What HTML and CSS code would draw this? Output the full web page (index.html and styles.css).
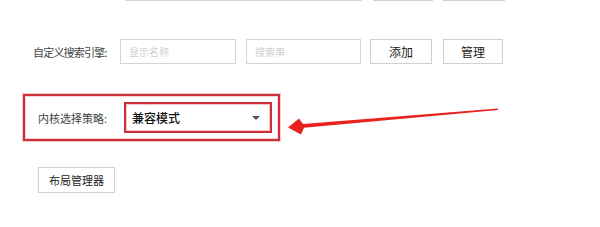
FILE: index.html
```html
<!DOCTYPE html>
<html lang="zh-CN">
<head>
    <meta charset="UTF-8">
    <title>高级设置</title>
    <link rel="stylesheet" href="styles.css">
</head>
<body>
    <div class="settings">
        <!-- row cut off at the top -->
        <div class="row row-top">
            <div class="input wide"></div>
            <div class="btn"></div>
            <div class="btn w62"></div>
        </div>

        <!-- custom search engine -->
        <div class="row row-engine">
            <span class="label">自定义搜索引擎:</span>
            <div class="input i1"><span class="placeholder">显示名称</span></div>
            <div class="input i2"><span class="placeholder">搜索串</span></div>
            <div class="btn add">添加</div>
            <div class="btn manage">管理</div>
        </div>

        <!-- kernel strategy, highlighted -->
        <div class="row row-kernel">
            <span class="label">内核选择策略:</span>
            <div class="select">
                <span class="select-text">兼容模式</span>
                <span class="caret"></span>
            </div>
        </div>

        <div class="btn layout">布局管理器</div>
    </div>

    <svg class="pointer" width="600" height="227" viewBox="0 0 600 227">
        <polygon fill="#e8221f" points="498,108.4 303,123.9 299,118.5 288,127.6 301,134.6 304,127.7 498,109.9"/>
    </svg>
</body>
</html>
```

FILE: styles.css
```css
body {
    margin: 0;
    font-family: "Noto Sans CJK SC", "Noto Sans", sans-serif;
    color: #333;
    background: #fff;
    overflow: hidden;
}
.settings {
    display: flex;
    flex-direction: column;
    align-items: flex-start;
}
.row {
    display: flex;
    align-items: center;
}
.input {
    box-sizing: border-box;
    height: 25px;
    border: 1px solid #d4d4d4;
    background: #fff;
    display: flex;
    align-items: center;
    padding-left: 8px;
}
.placeholder {
    color: #cfcfcf;
    font-size: 10px;
}
.btn {
    box-sizing: border-box;
    width: 60px;
    height: 25px;
    border: 1px solid #d0d0d0;
    background: #fff;
    font-size: 12px;
    color: #222;
    display: flex;
    align-items: center;
    justify-content: center;
}
.label {
    font-size: 11px;
    color: #444;
}

.row-top {
    margin-top: -24px;
    margin-left: 125px;
}
.row-top .wide {
    width: 237px;
    margin-right: 11px;
}
.row-top .btn {
    margin-right: 10px;
}
.w62 {
    width: 62px;
}

.row-engine {
    margin-top: 38px;
}
.row-engine .label {
    margin-left: 33px;
    width: 87px;
    letter-spacing: -0.8px;
}
.i1 {
    width: 116px;
    margin-right: 10px;
}
.i2 {
    width: 115px;
    margin-right: 9px;
}
.add {
    width: 62px;
    margin-right: 11px;
}

.row-kernel {
    box-sizing: border-box;
    margin-top: 30px;
    margin-left: 23px;
    width: 257px;
    height: 47px;
    border: 2px solid #cc2f38;
    box-shadow: 0 0 0 1px #f6c9c9, inset 0 0 0 1px #f6d4d4;
    padding-left: 13px;
}
.row-kernel .label {
    width: 86px;
}
.select {
    box-sizing: border-box;
    width: 148px;
    height: 31px;
    border: 2px solid #cc2f38;
    box-shadow: inset 0 0 0 1px #f3c6c6;
    display: flex;
    align-items: center;
    justify-content: space-between;
    padding: 0 10px 0 6px;
}
.select-text {
    font-size: 12px;
    color: #111;
    font-weight: 500;
}
.caret {
    width: 0;
    height: 0;
    border-left: 4px solid transparent;
    border-right: 4px solid transparent;
    border-top: 4px solid #555;
}

.layout {
    margin-top: 26px;
    margin-left: 38px;
    width: 77px;
    height: 26px;
    font-size: 11px;
    box-shadow: 0 1px 2px rgba(0,0,0,0.08);
}

.pointer {
    position: absolute;
    left: 0;
    top: 0;
    pointer-events: none;
}
```
